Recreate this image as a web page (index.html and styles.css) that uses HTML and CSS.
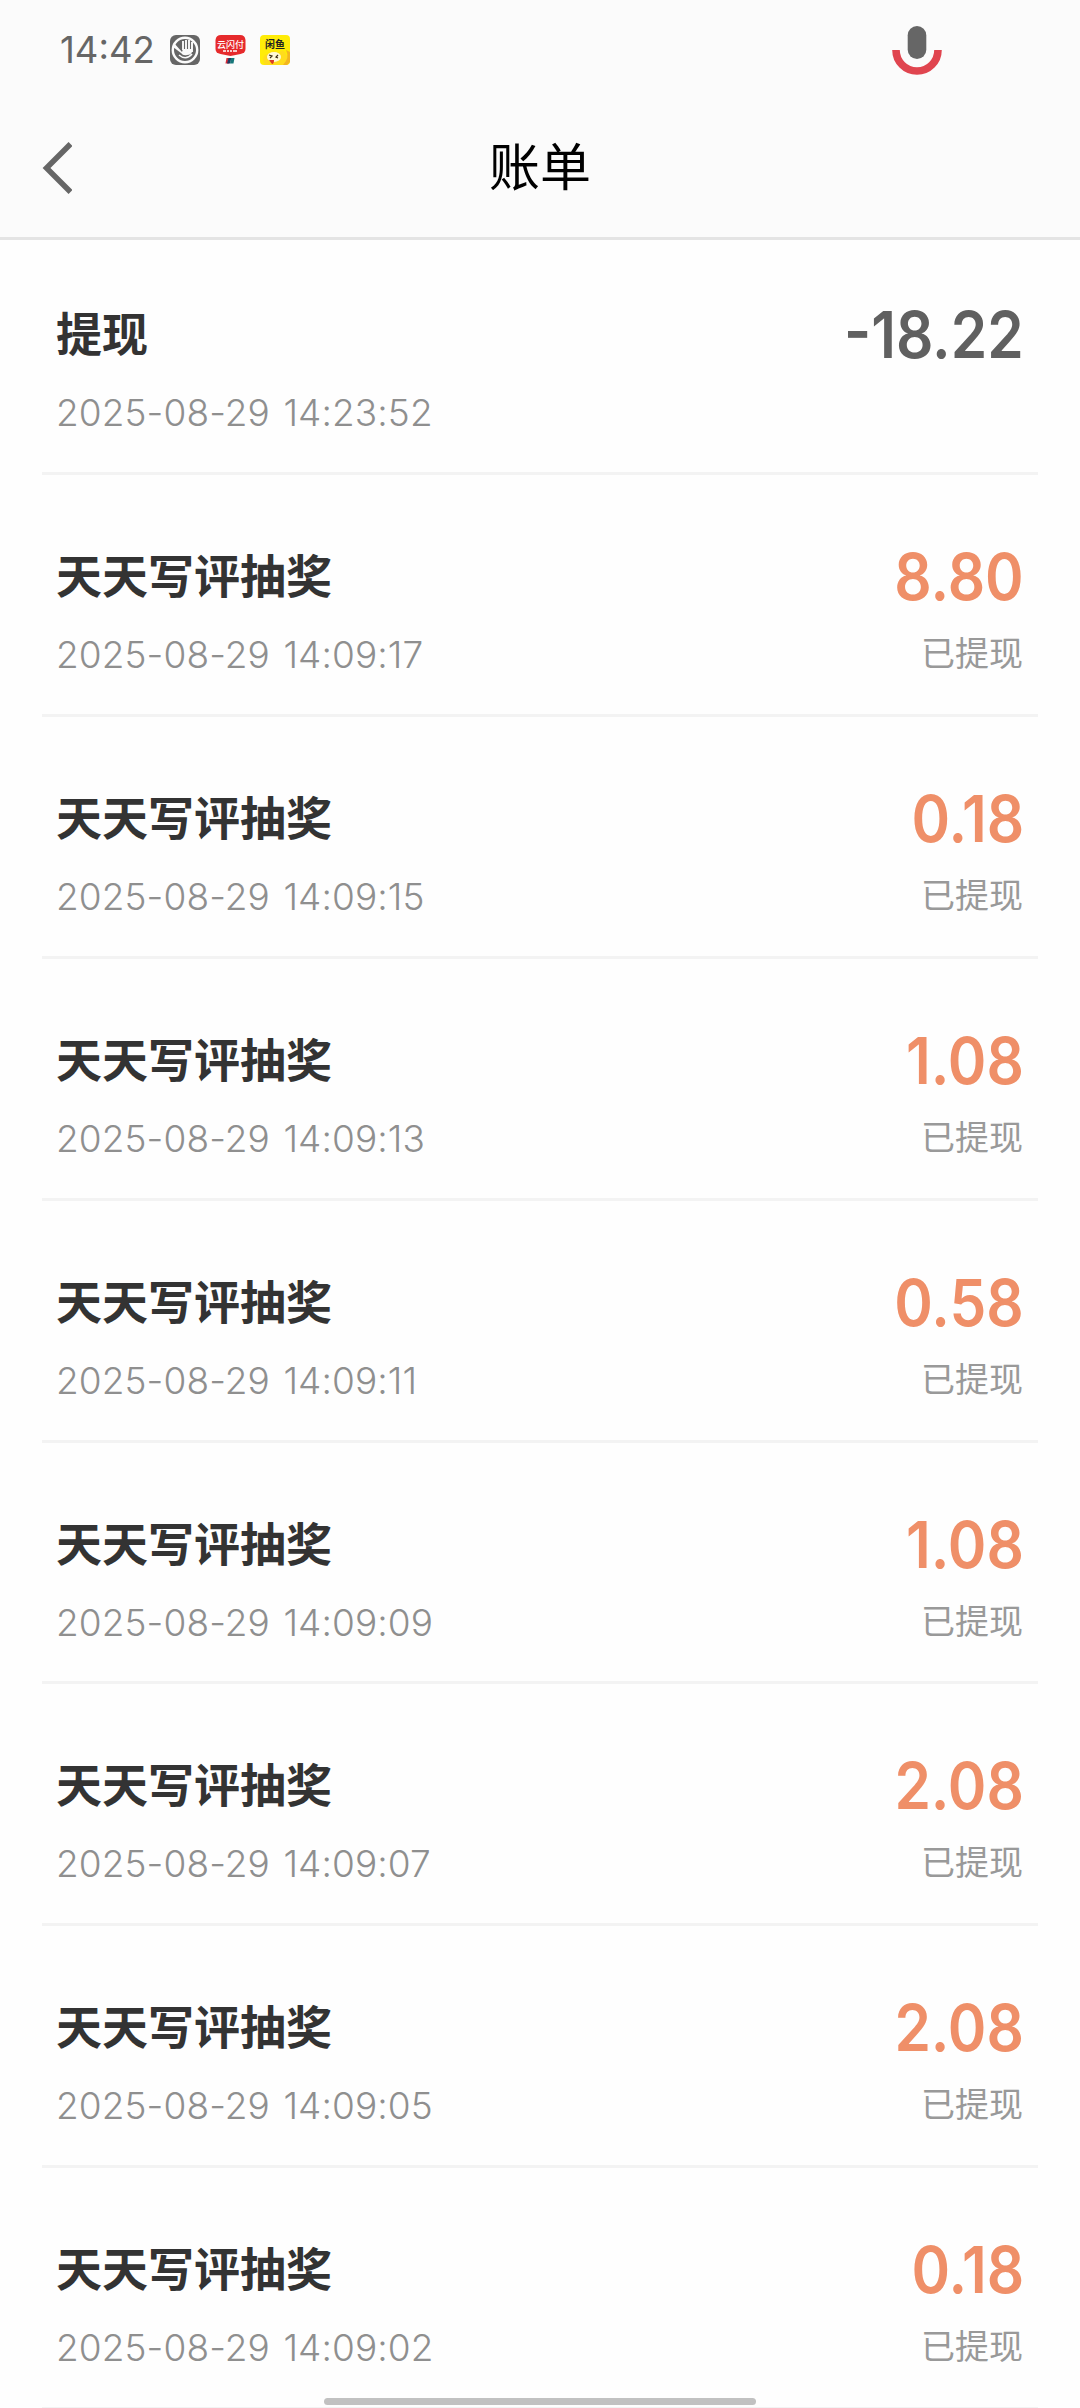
FILE: index.html
```html
<!DOCTYPE html>
<html lang="zh-CN">
<head>
<meta charset="utf-8">
<title>账单</title>
<link rel="stylesheet" href="styles.css">
</head>
<body>
<header class="header">
  <div class="status-bar">
    <span class="clock">14:42</span>
    <div class="notices">
      <svg width="30" height="30" viewBox="0 0 30 30">
        <rect width="30" height="30" rx="6" fill="#666"/>
        <circle cx="15" cy="15" r="12.200" fill="none" stroke="#fbfbfb" stroke-width="2.400"/>
        <path d="M4 8l8 9 1-3h9v3q-1 3-5 3-4 1-6-2L3 12z" fill="#fbfbfb"/>
        <path d="M13 15V6M16 15V5M19 15V5M22 17V7" fill="none" stroke="#fbfbfb" stroke-width="1.900"/>
        <path d="M9 20q7 6 13-1" fill="none" stroke="#fbfbfb" stroke-width="1.600"/>
      </svg>
      <svg width="31" height="30" viewBox="0 0 31 30">
        <path d="M6 0h19q5 0 5.500 5v9q0 4-5 5l-10 2-10-2q-5-1-5-5V5q.5-5 5.500-5z" fill="#e62a2c"/>
        <text class="logo-union" x="15.500" y="13">云闪付</text>
        <path d="M8 16h3m1 0h2m1 0h2m1 0h4" stroke="#fff" stroke-width="1.500"/>
        <path d="M11.500 23h4l-1.500 5.500h-3.500z" fill="#d92b38"/>
        <path d="M13.500 23h3L15 28.500h-3z" fill="#1d3b63"/>
        <path d="M16 23h3.500l-1 5.500H15z" fill="#16777a"/>
      </svg>
      <svg width="30" height="30" viewBox="0 0 30 30">
        <rect width="30" height="30" rx="4" fill="#ffec08"/>
        <path d="M5 30q-5-8 2-11 6-5 12-1 4-6 8 3v9z" fill="#ffdc1c"/>
        <path d="M26 15q4 8-3 15h4l3-3V17z" fill="#f3b521"/>
        <ellipse cx="14" cy="22" rx="7" ry="5" fill="#fff9d6"/>
        <text class="logo-fish" x="15" y="13">闲鱼</text>
        <path d="M9 20l3 1-2 2M18 20l-2 2 2 1" fill="none" stroke="#3b2b12" stroke-width="1.200"/>
        <path d="M9 25h5q0 4-2 4z" fill="#dc3b25"/>
      </svg>
    </div>
    <svg class="mic" width="50" height="50" viewBox="0 0 50 50">
      <rect x="15.700" y="1" width="18.600" height="33" rx="9.300" fill="#666"/>
      <path d="M4 25a21 21 0 0 0 42 0" fill="none" stroke="#e0454f" stroke-width="7.600"/>
    </svg>
  </div>
  <div class="nav-bar">
    <svg class="back" width="32" height="54" viewBox="0 0 32 54">
      <path d="M30.500 3L6.500 27l24 24" fill="none" stroke="#666" stroke-width="5.500"/>
    </svg>
    <h1 class="page-title">账单</h1>
  </div>
</header>
<main class="bill-list">
  <section class="bill"><div class="info"><h2 class="name">提现</h2><time class="date">2025-08-29 14:23:52</time></div><div class="result"><span class="amount expense">-18.22</span></div></section>
  <section class="bill"><div class="info"><h2 class="name">天天写评抽奖</h2><time class="date">2025-08-29 14:09:17</time></div><div class="result"><span class="amount">8.80</span><span class="state">已提现</span></div></section>
  <section class="bill"><div class="info"><h2 class="name">天天写评抽奖</h2><time class="date">2025-08-29 14:09:15</time></div><div class="result"><span class="amount">0.18</span><span class="state">已提现</span></div></section>
  <section class="bill"><div class="info"><h2 class="name">天天写评抽奖</h2><time class="date">2025-08-29 14:09:13</time></div><div class="result"><span class="amount">1.08</span><span class="state">已提现</span></div></section>
  <section class="bill"><div class="info"><h2 class="name">天天写评抽奖</h2><time class="date">2025-08-29 14:09:11</time></div><div class="result"><span class="amount">0.58</span><span class="state">已提现</span></div></section>
  <section class="bill"><div class="info"><h2 class="name">天天写评抽奖</h2><time class="date">2025-08-29 14:09:09</time></div><div class="result"><span class="amount">1.08</span><span class="state">已提现</span></div></section>
  <section class="bill"><div class="info"><h2 class="name">天天写评抽奖</h2><time class="date">2025-08-29 14:09:07</time></div><div class="result"><span class="amount">2.08</span><span class="state">已提现</span></div></section>
  <section class="bill"><div class="info"><h2 class="name">天天写评抽奖</h2><time class="date">2025-08-29 14:09:05</time></div><div class="result"><span class="amount">2.08</span><span class="state">已提现</span></div></section>
  <section class="bill"><div class="info"><h2 class="name">天天写评抽奖</h2><time class="date">2025-08-29 14:09:02</time></div><div class="result"><span class="amount">0.18</span><span class="state">已提现</span></div></section>
</main>
<div class="home-indicator"></div>
</body>
</html>
```
FILE: styles.css
```css
* { box-sizing: border-box; }
body {
  margin: 0;
  height: 2408px;
  overflow: hidden;
  background: #fefefe;
  font-family: Inter, "Noto Sans CJK SC", sans-serif;
}
svg { display: block; }
.header {
  height: 240px;
  background: #fbfbfb;
  border-bottom: 3px solid #e4e4e4;
}
.status-bar {
  height: 99px;
  display: flex;
  align-items: center;
  padding: 0 138px 0 60px;
}
.clock {
  width: 110px;
  font-size: 36.500px;
  line-height: 46px;
  color: #666;
}
.notices { display: flex; gap: 14.500px; }
.mic { margin-left: auto; }
.logo-union, .logo-fish {
  font-family: "Noto Sans CJK SC", sans-serif;
  text-anchor: middle;
}
.logo-union { font-size: 9px; fill: #fff; font-weight: 500; }
.logo-fish { font-size: 10px; fill: #222; font-weight: 700; }
.nav-bar {
  height: 138px;
  display: grid;
  grid-template-columns: 40px 1fr 40px;
  padding: 0 40px;
  align-items: start;
}
.back { margin-top: 42px; }
.page-title {
  margin: 33px 0 0;
  font-size: 51px;
  line-height: 72px;
  font-weight: 400;
  text-align: center;
  color: #000;
}
.bill-list { padding: 0 42px; }
.bill {
  height: 241.900px;
  display: flex;
  justify-content: space-between;
  padding: 71px 15px 0 14px;
  border-bottom: 3px solid #f3f3f3;
}
.bill:first-child { height: 235px; padding-top: 64px; }
.info, .result { display: flex; flex-direction: column; gap: 22px; }
.result { align-items: flex-end; }
.name {
  margin: 0;
  font-size: 46px;
  line-height: 60px;
  font-weight: 700;
  color: #333;
}
.date {
  font-size: 37px;
  line-height: 53px;
  font-weight: 300;
  letter-spacing: 0.100px;
  word-spacing: 3px;
  color: #8f8f8f;
}
.amount {
  margin-right: -1px;
  font-size: 65px;
  line-height: 62px;
  font-weight: 600;
  color: #ef8f68;
  transform: scaleX(0.9);
  transform-origin: right center;
}
.expense { color: #606060; }
.state {
  font-size: 34px;
  line-height: 48px;
  color: #999;
}
.home-indicator {
  position: fixed;
  left: 324px;
  bottom: 3px;
  width: 432px;
  height: 7px;
  border-radius: 4px;
  background: #c1c1c1;
}
```
